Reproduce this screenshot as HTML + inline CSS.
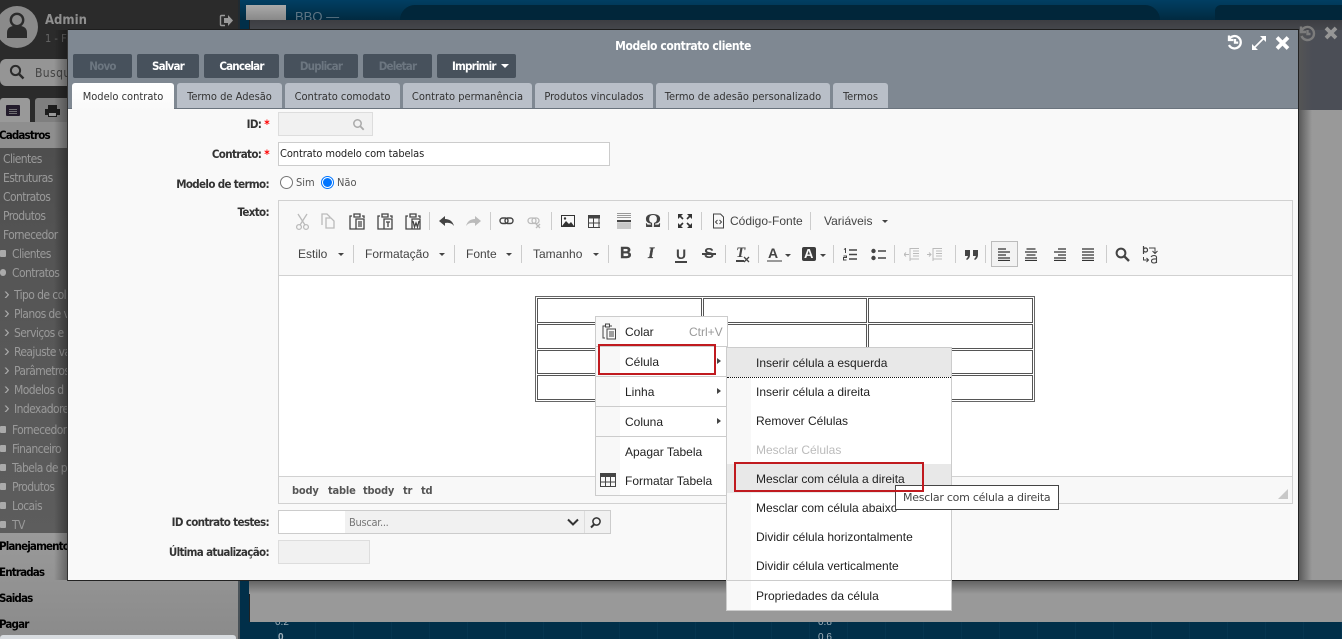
<!DOCTYPE html>
<html><head><meta charset="utf-8"><style>
html,body{margin:0;padding:0;width:1342px;height:639px;overflow:hidden;background:#012f49}
body{position:relative;font-family:"Liberation Sans",sans-serif;font-size:12px}
div,span,svg{position:absolute;box-sizing:border-box}
.t{white-space:nowrap;line-height:14px}
.c{font-family:"DejaVu Sans Condensed","DejaVu Sans",sans-serif;font-stretch:condensed}
.sb{color:#9a9a9a;font-size:12px;letter-spacing:-.6px;font-family:"DejaVu Sans Condensed","DejaVu Sans",sans-serif;font-stretch:condensed}
.sd{color:#000;font-weight:bold;font-size:11.5px;letter-spacing:-.85px;font-family:"DejaVu Sans Condensed","DejaVu Sans",sans-serif;font-stretch:condensed}
.cv{color:#aaa;font-size:17px;left:4px;line-height:14px;font-family:"Liberation Sans",sans-serif;white-space:nowrap}
.dot{width:6px;height:7px;background:#aaa;border-radius:1px;left:0}
.btn{top:54px;height:24px;background:#47515c;border-radius:2px;color:#fff;font-weight:bold;font-size:11.5px;text-align:center;line-height:24px;letter-spacing:-.8px;font-family:"DejaVu Sans Condensed","DejaVu Sans",sans-serif;font-stretch:condensed}
.btn.off{color:#6c7680}
.tab{top:83px;height:25px;background:#b9bfc8;border-radius:3px 3px 0 0;color:#333;font-size:11px;text-align:center;line-height:27px;white-space:nowrap;font-family:"DejaVu Sans Condensed","DejaVu Sans",sans-serif;font-stretch:condensed}
.lb{color:#333;font-weight:bold;font-size:11.5px;letter-spacing:-.65px;right:1073px;margin-top:1px;white-space:nowrap;line-height:14px;font-family:"DejaVu Sans Condensed","DejaVu Sans",sans-serif;font-stretch:condensed}
.r{color:#f00}
.tb{color:#444;font-size:12px;white-space:nowrap;line-height:14px}
.sep{width:1px;height:18px;background:#ccc}
.ar{width:0;height:0;border-left:3px solid transparent;border-right:3px solid transparent;border-top:3px solid #444}
.cell{border:1px solid #555;background:#fff}
.mi{color:#222;font-size:12px;white-space:nowrap;line-height:14px}
.tri{width:0;height:0;border-top:3px solid transparent;border-bottom:3px solid transparent;border-left:4px solid #444;left:717px}
.hr{height:1px;background:#ccc}
.ic{fill:none;stroke:#444;stroke-width:1.3}
.icd{fill:none;stroke:#bbb;stroke-width:1.3}
.pb{color:#555;font-weight:bold;font-size:11px;letter-spacing:-.2px;top:484px;white-space:nowrap;line-height:14px;font-family:"DejaVu Sans Condensed","DejaVu Sans",sans-serif;font-stretch:condensed}
</style></head><body>

<!-- backdrop right -->
<div style="left:240px;top:0;width:1102px;height:639px;background:repeating-linear-gradient(90deg,#012f49 0,#012f49 37px,#053550 37px,#053550 38px)"></div>
<div style="left:240px;top:0;width:1102px;height:20px;background:linear-gradient(#013f63,#012a40)"></div>
<div style="left:400px;top:5px;width:760px;height:15px;background:#01263a;border-radius:18px 18px 0 0"></div>
<div style="left:1215px;top:5px;width:127px;height:15px;background:#01263a;border-radius:6px 0 0 0"></div>
<div style="left:246px;top:5px;width:40px;height:15px;background:linear-gradient(#aaa,#888)"></div>
<span class="t" style="left:295px;top:10px;color:#5d7483;font-size:13px">BBO —</span>
<span class="t" style="left:275px;top:616px;color:#9fb0bb;font-size:10px;">0.2</span>
<span class="t" style="left:278px;top:631px;color:#9fb0bb;font-size:10px;font-weight:bold">0</span>
<span class="t" style="left:818px;top:616px;color:#9fb0bb;font-size:10px;">0.8</span>
<span class="t" style="left:818px;top:631px;color:#9fb0bb;font-size:10px;">0.6</span>
<div style="left:249px;top:20px;width:1093px;height:602px;background:#999;border-top:1px solid #1c1c1c;border-left:1px solid #222"></div>
<div style="left:250px;top:20px;width:1092px;height:16px;background:linear-gradient(#3d3e42,#4a4c52)"></div>
<div style="left:1298px;top:30px;width:44px;height:80px;background:#4b4e56"></div>
<div style="left:1298px;top:110px;width:44px;height:512px;background:#999"></div>
<div style="left:1298px;top:30px;width:14px;height:560px;background:linear-gradient(90deg,#555,rgba(85,85,85,0))"></div>
<div style="left:249px;top:580px;width:1093px;height:14px;background:linear-gradient(#606060,#999)"></div>
<svg style="left:1299px;top:25px" width="40" height="17" viewBox="0 0 40 17"><g fill="none" stroke="#7c7c7c" stroke-width="2.400"><path d="M2.500 6a6.500 6.500 0 1 1 0 5"/><path d="M2 1.500V7h5"/><path d="M8.500 5v4h3"/></g><path d="M27 3l10 10M37 3l-10 10" stroke="#969696" stroke-width="3.800"/></svg>

<!-- sidebar -->
<div style="left:0;top:0;width:240px;height:639px;background:#8c8c8c"></div>
<div style="left:0;top:0;width:240px;height:58px;background:#2b2b2b"></div>
<div style="left:0;top:58px;width:240px;height:39px;background:#2b2b2b"></div>
<div style="left:0;top:59px;width:240px;height:27px;background:#959595;border-radius:6px"></div>
<div style="left:0;top:97px;width:240px;height:25px;background:#2b2b2b"></div>
<div style="left:0;top:98px;width:30px;height:24px;background:#999;border-radius:3px 3px 0 0"></div>
<div style="left:35px;top:98px;width:40px;height:24px;background:#7f7f7f;border-radius:3px 3px 0 0"></div>
<div style="left:0;top:122px;width:240px;height:26px;background:#8e8e8e"></div>
<div style="left:0;top:148px;width:240px;height:385px;background:linear-gradient(#4e4e4e,#555 30%,#5d5d5d)"></div>
<div style="left:0;top:533px;width:240px;height:106px;background:linear-gradient(#9a9a9a,#8a8a8a)"></div>
<div style="left:0;top:635px;width:236px;height:4px;background:#d8dce0;border-radius:3px 3px 0 0"></div>
<div style="left:238px;top:0;width:2px;height:639px;background:#1a2a33;opacity:.6"></div>
<!-- avatar -->
<div style="left:-4px;top:6px;width:42px;height:42px;border-radius:50%;background:#8a8a8a"></div>
<svg style="left:4px;top:12px" width="26" height="28" viewBox="0 0 26 28"><circle cx="13" cy="8" r="6.200" fill="none" stroke="#2b2b2b" stroke-width="2.400"/><path d="M3 26v-5q0-6 6-7h8q6 1 6 7v5z" fill="#2b2b2b"/></svg>
<span class="t c" style="left:45px;top:14px;color:#8f8f8f;font-weight:bold;font-size:13px;">Admin</span>
<span class="t c" style="left:45px;top:32px;color:#666;font-size:11px;">1 - Filial</span>
<svg style="left:219px;top:14px" width="14" height="13" viewBox="0 0 14 13"><path d="M6 1.500H2.500q-1 0-1 1v8q0 1 1 1H6" fill="none" stroke="#999" stroke-width="1.400"/><path d="M5 4h4V1l5 5.500L9 12V9H5z" fill="#999"/></svg>
<svg style="left:9px;top:64px" width="16" height="16" viewBox="0 0 16 16"><circle cx="6.500" cy="6.500" r="4.600" fill="none" stroke="#2b2b2b" stroke-width="2"/><path d="M10 10l4.500 4.500" stroke="#2b2b2b" stroke-width="2.400"/></svg>
<span class="t c" style="left:35px;top:66px;color:#444;font-size:12px;letter-spacing:.4px">Busque</span>
<svg style="left:6px;top:105px" width="14" height="11" viewBox="0 0 14 11"><rect width="14" height="11" rx="1" fill="#231c2c"/><path d="M3 4.500h8M3 6.500h8M3 8.500h8" stroke="#8a8a8a" stroke-width=".7"/></svg>
<svg style="left:45px;top:104px" width="15" height="14" viewBox="0 0 15 14"><path d="M3 1h9v4H3zM0 5h15v6h-3v2H3v-2H0z" fill="#1c1c1c"/><path d="M4 9h7v3H4z" fill="#999"/></svg>
<span class="t sd" style="left:-1px;top:128px">Cadastros</span>
<span class="t sb" style="left:3px;top:152px">Clientes</span>
<span class="t sb" style="left:3px;top:171px">Estruturas</span>
<span class="t sb" style="left:3px;top:190px">Contratos</span>
<span class="t sb" style="left:3px;top:209px">Produtos</span>
<span class="t sb" style="left:3px;top:228px">Fornecedor</span>
<div class="dot" style="top:250px"></div><span class="t sb" style="left:12px;top:247px">Clientes</span>
<div class="dot" style="top:269px;border-radius:3px"></div><span class="t sb" style="left:12px;top:266px">Contratos</span>
<span class="cv" style="top:287px">›</span><span class="t sb" style="left:14px;top:288px">Tipo de col</span>
<span class="cv" style="top:306px">›</span><span class="t sb" style="left:14px;top:307px">Planos de v</span>
<span class="cv" style="top:325px">›</span><span class="t sb" style="left:14px;top:326px">Serviços e c</span>
<span class="cv" style="top:344px">›</span><span class="t sb" style="left:14px;top:345px">Reajuste va</span>
<span class="cv" style="top:363px">›</span><span class="t sb" style="left:14px;top:364px">Parâmetros</span>
<span class="cv" style="top:382px">›</span><span class="t sb" style="left:14px;top:383px">Modelos d</span>
<span class="cv" style="top:401px">›</span><span class="t sb" style="left:14px;top:402px">Indexadores</span>
<div class="dot" style="top:426px"></div><span class="t sb" style="left:12px;top:423px">Fornecedor</span>
<div class="dot" style="top:445px"></div><span class="t sb" style="left:12px;top:442px">Financeiro</span>
<div class="dot" style="top:464px"></div><span class="t sb" style="left:12px;top:461px">Tabela de p</span>
<div class="dot" style="top:483px"></div><span class="t sb" style="left:12px;top:480px">Produtos</span>
<div class="dot" style="top:502px"></div><span class="t sb" style="left:12px;top:499px">Locais</span>
<div class="dot" style="top:521px"></div><span class="t sb" style="left:12px;top:518px">TV</span>
<span class="t sd" style="left:-1px;top:539px">Planejamento</span>
<span class="t sd" style="left:-1px;top:565px">Entradas</span>
<span class="t sd" style="left:-1px;top:591px">Saidas</span>
<span class="t sd" style="left:-1px;top:617px">Pagar</span>
<div style="left:54px;top:30px;width:14px;height:550px;background:linear-gradient(90deg,rgba(0,0,0,0),rgba(0,0,0,.35))"></div>

<!-- modal -->
<div style="left:67px;top:29px;width:1232px;height:552px;background:#f9f9f9;border:1px solid #222;border-top-color:#1e1e1e;border-left-color:#333"></div>
<div style="left:68px;top:30px;width:1230px;height:79px;background:#7f8892"></div>
<span class="t c" style="left:568px;top:38px;width:230px;text-align:center;color:#fff;font-weight:bold;font-size:12px;letter-spacing:-.4px;margin-top:1px">Modelo contrato cliente</span>
<svg style="left:1226px;top:33px" width="66" height="19" viewBox="0 0 66 19"><g fill="none" stroke="#fff" stroke-width="2.300"><path d="M3 6.500a6.200 6.200 0 1 1 0 5.500"/><path d="M3 2.500V7h4.500"/><path d="M9 6v3.600h3.200"/></g><g stroke="#fff" stroke-width="1.700"><path d="M27 16L39 4"/></g><path d="M26 11v6h6zM40 9V3h-6z" fill="#fff"/><path d="M51 4.500l11 11M62 4.500l-11 11" stroke="#fff" stroke-width="3.800"/></svg>

<div class="btn off" style="left:73px;width:59px">Novo</div>
<div class="btn" style="left:137px;width:62px">Salvar</div>
<div class="btn" style="left:204px;width:75px">Cancelar</div>
<div class="btn off" style="left:284px;width:74px">Duplicar</div>
<div class="btn off" style="left:363px;width:69px">Deletar</div>
<div class="btn" style="left:437px;width:79px;text-align:left;padding-left:15px">Imprimir<span style="left:64px;top:10px;border-left:4px solid transparent;border-right:4px solid transparent;border-top:4px solid #fff"></span></div>

<div style="left:68px;top:108px;width:1230px;height:1px;background:#6a737d"></div>
<div class="tab" style="left:72px;width:102px;background:linear-gradient(#fff,#f9f9f9);height:27px">Modelo contrato</div>
<div class="tab" style="left:177px;width:105px">Termo de Adesão</div>
<div class="tab" style="left:285px;width:115px">Contrato comodato</div>
<div class="tab" style="left:403px;width:129px">Contrato permanência</div>
<div class="tab" style="left:535px;width:118px">Produtos vinculados</div>
<div class="tab" style="left:656px;width:174px">Termo de adesão personalizado</div>
<div class="tab" style="left:833px;width:55px">Termos</div>

<!-- form -->
<span class="lb" style="top:116px">ID: <b class="r">*</b></span>
<div style="left:278px;top:112px;width:95px;height:24px;background:#f1f1f1;border:1px solid #ddd"></div>
<svg style="left:352px;top:118px" width="13" height="13" viewBox="0 0 13 13"><circle cx="5.500" cy="5.500" r="3.700" fill="none" stroke="#aaa" stroke-width="1.500"/><path d="M8.300 8.300l3.400 3.400" stroke="#aaa" stroke-width="1.800"/></svg>
<span class="lb" style="top:146px">Contrato: <b class="r">*</b></span>
<div style="left:278px;top:142px;width:332px;height:24px;background:#fff;border:1px solid #ccc"></div>
<span class="t c" style="left:280px;top:147px;color:#222;font-size:11px;letter-spacing:-.1px">Contrato modelo com tabelas</span>
<span class="lb" style="top:176px">Modelo de termo:</span>
<div style="left:280px;top:176px;width:13px;height:13px;border-radius:50%;border:1px solid #767676;background:#fff"></div>
<span class="t c" style="left:296px;top:176px;color:#555;font-size:11px;">Sim</span>
<div style="left:321px;top:176px;width:13px;height:13px;border-radius:50%;border:1px solid #0075ff;background:#fff"></div>
<div style="left:323px;top:178px;width:9px;height:9px;border-radius:50%;background:#0075ff"></div>
<span class="t c" style="left:337px;top:176px;color:#555;font-size:11px;">Não</span>
<span class="lb" style="top:204px">Texto:</span>

<!-- editor -->
<div style="left:278px;top:200px;width:1015px;height:304px;border:1px solid #d1d1d1;background:#f8f8f8"></div>
<div style="left:279px;top:275px;width:1013px;height:202px;background:#fff;border-top:1px solid #d1d1d1;border-bottom:1px solid #d1d1d1"></div>

<!-- toolbar row 1 -->
<svg style="left:290px;top:210px" width="310" height="22" viewBox="0 0 310 22">
<g class="icd"><circle cx="9" cy="17" r="2.400"/><circle cx="16" cy="17" r="2.400"/><path d="M10 15L17 4M15 15L8 4"/>
<path d="M32 15V4h5l3 3v1M36 8h5l3 3v7h-8z"/></g>
<g class="ic"><path d="M62 6h-2v13h6M72 6h2v2M64 4h6v3h-6zM66 9h8v10h-8zM68 12h4M68 14h4M68 16h4"/>
<path d="M90 6h-2v13h6M100 6h2v2M92 4h6v3h-6zM94 9h8v10h-8zM96 12h4M98 12v5"/>
<path d="M118 6h-2v13h6M128 6h2v2M120 4h6v3h-6zM122 9h8v10h-8zM123 11l1.500 6 1.500-4 1.500 4 1.500-6"/></g>
<path d="M149 11l6-5v3q7 0 9 7-3-4-9-3v3z" fill="#444"/>
<path d="M191 11l-6-5v3q-7 0-9 7 3-4 9-3v3z" fill="#bbb"/>
<g class="ic" style="stroke-width:1.400"><rect x="210" y="8" width="8" height="5.500" rx="2.700"/><rect x="215" y="8" width="8" height="5.500" rx="2.700"/></g>
<g class="icd"><rect x="238" y="8" width="8" height="5.500" rx="2.700"/><rect x="242" y="8" width="7" height="5.500" rx="2.700"/><path d="M246 14l4 4M250 14l-4 4"/></g>
<rect x="271.500" y="5.500" width="13" height="11" fill="none" stroke="#333"/><path d="M272 16l4-5 3 3 2-2 3 4z" fill="#333"/><circle cx="275" cy="8.500" r="1.200" fill="#333"/>
<rect x="298.500" y="5.500" width="15" height="12" fill="none" stroke="#444"/><rect x="298" y="5" width="16" height="3.500" fill="#444"/><path d="M298 13h16M303.500 8v10M309 8v10" stroke="#444"/>
</svg>
<div class="sep" style="left:429px;top:212px"></div>
<div class="sep" style="left:490px;top:212px"></div>
<div class="sep" style="left:551px;top:212px"></div>
<svg style="left:615px;top:212px" width="18" height="18" viewBox="0 0 18 18"><path d="M2 1.500h14M2 3.500h14M2 5.500h14M2 12h14M2 14h14M2 16h14" stroke="#999"/><rect x="2" y="8" width="14" height="2.200" fill="#444"/></svg>
<span class="t" style="left:645px;top:211px;color:#444;font-family:'Liberation Serif',serif;font-size:20px;line-height:20px;font-weight:bold">Ω</span>
<div class="sep" style="left:668px;top:212px"></div>
<svg style="left:677px;top:213px" width="16" height="16" viewBox="0 0 16 16"><g stroke="#333" stroke-width="1.600"><path d="M2 2l4 4M14 2l-4 4M2 14l4-4M14 14l-4-4"/></g><path d="M1 1h5L1 6zM15 1h-5l5 5zM1 15h5l-5-5zM15 15h-5l5-5z" fill="#333"/></svg>
<div class="sep" style="left:701px;top:212px"></div>
<svg style="left:712px;top:213px" width="13" height="16" viewBox="0 0 13 16"><path d="M1.500 1h7l3 3v11h-10z" fill="none" stroke="#444"/><path d="M5.500 7l-2 2 2 2M7.500 7l2 2-2 2" fill="none" stroke="#444"/></svg>
<span class="tb" style="left:730px;top:214px">Código-Fonte</span>
<div class="sep" style="left:810px;top:212px"></div>
<span class="tb" style="left:824px;top:214px">Variáveis</span><div class="ar" style="left:882px;top:220px"></div>

<!-- toolbar row 2 -->
<span class="tb" style="left:298px;top:247px">Estilo</span><div class="ar" style="left:338px;top:253px"></div>
<div class="sep" style="left:353px;top:245px"></div>
<span class="tb" style="left:365px;top:247px">Formatação</span><div class="ar" style="left:439px;top:253px"></div>
<div class="sep" style="left:454px;top:245px"></div>
<span class="tb" style="left:466px;top:247px">Fonte</span><div class="ar" style="left:506px;top:253px"></div>
<div class="sep" style="left:521px;top:245px"></div>
<span class="tb" style="left:533px;top:247px">Tamanho</span><div class="ar" style="left:593px;top:253px"></div>
<div class="sep" style="left:608px;top:245px"></div>
<span class="t" style="left:620px;top:246px;color:#444;font-weight:bold;font-size:16px;line-height:16px;-webkit-text-stroke:.4px #444">B</span>
<span class="t" style="left:648px;top:246px;color:#444;font-weight:bold;font-style:italic;font-size:16px;line-height:16px;font-family:'Liberation Serif',serif;-webkit-text-stroke:.3px #444">I</span>
<span class="t" style="left:676px;top:246px;color:#444;font-weight:bold;font-size:14px;line-height:16px">U</span>
<div style="left:675px;top:261px;width:12px;height:1.500px;background:#444"></div>
<span class="t" style="left:704px;top:246px;color:#444;font-weight:bold;font-size:15px;line-height:16px">S</span>
<div style="left:702px;top:253px;width:14px;height:1.500px;background:#444"></div>
<div class="sep" style="left:725px;top:245px"></div>
<span class="t" style="left:736px;top:245px;color:#444;font-weight:bold;font-style:italic;font-size:15px;line-height:16px;font-family:'Liberation Serif',serif;">T</span>
<div style="left:736px;top:260px;width:8px;height:1.500px;background:#444"></div>
<svg style="left:743px;top:256px" width="7" height="7" viewBox="0 0 7 7"><path d="M1 1l5 5M6 1l-5 5" stroke="#444" stroke-width="1.300"/></svg>
<div class="sep" style="left:758px;top:245px"></div>
<span class="t" style="left:768px;top:246px;color:#444;font-weight:bold;font-size:14px;line-height:15px">A</span>
<div style="left:767px;top:260px;width:15px;height:2px;background:#999"></div>
<div class="ar" style="left:785px;top:254px"></div>
<div style="left:802px;top:247px;width:14px;height:14px;background:#3d3d3d;border-radius:2px"></div>
<span class="t" style="left:804px;top:246px;color:#f8f8f8;font-weight:bold;font-size:13px;line-height:15px">A</span>
<div class="ar" style="left:820px;top:254px"></div>
<div class="sep" style="left:833px;top:245px"></div>
<svg style="left:843px;top:248px" width="14" height="13" viewBox="0 0 14 13"><path d="M6 2h8M6 6.500h8M6 11h8" stroke="#444" stroke-width="1.400"/><path d="M1 1.500l1.500-1V5M.5 8h3v1.500h-3V12h3" fill="none" stroke="#444"/></svg>
<svg style="left:871px;top:248px" width="15" height="13" viewBox="0 0 15 13"><circle cx="2.500" cy="3" r="2.200" fill="#444"/><circle cx="2.500" cy="10" r="2.200" fill="#444"/><path d="M7 3h8M7 10h8" stroke="#444" stroke-width="1.500"/></svg>
<div class="sep" style="left:894px;top:245px"></div>
<svg style="left:904px;top:248px" width="44" height="13" viewBox="0 0 44 13"><path d="M6 .5h9M9 3h6M9 5.500h6M9 8h6M6 11h9" stroke="#bbb"/><path d="M5 6.500H0M2 4.500l-2 2 2 2M6 0v13" stroke="#bbb" fill="none"/><path d="M29 .5h9M32 3h6M32 5.500h6M32 8h6M29 11h9" stroke="#bbb"/><path d="M23 6.500h4M25 4.500l2 2-2 2M29 0v13" stroke="#bbb" fill="none"/></svg>
<div class="sep" style="left:955px;top:245px"></div>
<svg style="left:964px;top:250px" width="16" height="10" viewBox="0 0 16 10"><path d="M1 0h5v5q0 3-3 5l-1-1q1.500-1 2-3H1zM9 0h5v5q0 3-3 5l-1-1q1.500-1 2-3H9z" fill="#444"/></svg>
<div class="sep" style="left:985px;top:245px"></div>
<div style="left:991px;top:241px;width:27px;height:26px;background:#f2f2f2;border:1px solid #bbb"></div>
<svg style="left:998px;top:248px" width="104" height="13" viewBox="0 0 104 13">
<g stroke="#333" stroke-width="1.300"><path d="M0 1h8M0 4h12M0 7h8M0 10h12M0 12.500h12"/><path d="M28.500 1h9M27 4h12M28.500 7h9M27 10h12M27 12.500h12"/><path d="M60 1h8M56 4h12M60 7h8M56 10h12M56 12.500h12"/><path d="M84 1h12M84 4h12M84 7h12M84 10h12M84 12.500h12"/></g></svg>
<div class="sep" style="left:1106px;top:245px"></div>
<svg style="left:1115px;top:247px" width="15" height="15" viewBox="0 0 15 15"><circle cx="6" cy="6" r="4.400" fill="none" stroke="#444" stroke-width="2"/><path d="M9.500 9.500l4.500 4.500" stroke="#444" stroke-width="2.400"/></svg>
<svg style="left:1141px;top:245px" width="18" height="19" viewBox="0 0 18 19"><path d="M2.500 1v8M2.500 5q0-2 2-2t2 2-2 2-2-2z" fill="none" stroke="#444" stroke-width="1.200"/><path d="M8 3h6v5M11.500 6l2.500 2.500L16.500 6M2.500 12v3h5M5.500 13l2 2-2 2" fill="none" stroke="#444"/><path d="M10 12q1-1.500 3-1.500t2.500 1.500v6M15.500 14q-5-.5-5 2 0 2 2.500 2t2.500-2" fill="none" stroke="#444" stroke-width="1.100"/></svg>

<!-- table in editor -->
<div style="left:535px;top:296px;width:500px;height:106px;border:1px solid #666;background:#fff"></div>
<div class="cell" style="left:537px;top:298px;width:165px;height:25px"></div>
<div class="cell" style="left:703px;top:298px;width:164px;height:25px"></div>
<div class="cell" style="left:868px;top:298px;width:165px;height:25px"></div>
<div class="cell" style="left:537px;top:324px;width:165px;height:25px"></div>
<div class="cell" style="left:703px;top:324px;width:164px;height:25px"></div>
<div class="cell" style="left:868px;top:324px;width:165px;height:25px"></div>
<div class="cell" style="left:537px;top:350px;width:165px;height:24px"></div>
<div class="cell" style="left:703px;top:350px;width:164px;height:24px"></div>
<div class="cell" style="left:868px;top:350px;width:165px;height:24px"></div>
<div class="cell" style="left:537px;top:375px;width:165px;height:25px"></div>
<div class="cell" style="left:703px;top:375px;width:164px;height:25px"></div>
<div class="cell" style="left:868px;top:375px;width:165px;height:25px"></div>

<!-- path bar -->
<span class="pb" style="left:292px">body</span>
<span class="pb" style="left:328px">table</span>
<span class="pb" style="left:363px">tbody</span>
<span class="pb" style="left:403px">tr</span>
<span class="pb" style="left:421px">td</span>
<svg style="left:1278px;top:489px" width="11" height="11" viewBox="0 0 11 11"><path d="M10 0v10H0z" fill="#c8c8c8"/></svg>

<!-- bottom form -->
<span class="lb" style="top:514px">ID contrato testes:</span>
<div style="left:278px;top:510px;width:333px;height:24px;background:#fff;border:1px solid #ccc"></div>
<div style="left:345px;top:511px;width:265px;height:22px;background:#f1f1f1"></div>
<span class="t c" style="left:349px;top:516px;color:#777;font-size:11px;letter-spacing:-.3px">Buscar...</span>
<svg style="left:566px;top:518px" width="14" height="9" viewBox="0 0 14 9"><path d="M2 1.500l5 5 5-5" fill="none" stroke="#333" stroke-width="2"/></svg>
<div style="left:584px;top:511px;width:1px;height:22px;background:#ddd"></div>
<svg style="left:590px;top:516px" width="13" height="13" viewBox="0 0 13 13"><circle cx="6.500" cy="5.500" r="3.600" fill="none" stroke="#333" stroke-width="1.500"/><path d="M4 8.500L1 11.500" stroke="#333" stroke-width="2"/></svg>
<span class="lb" style="top:544px">Última atualização:</span>
<div style="left:278px;top:540px;width:92px;height:24px;background:#f1f1f1;border:1px solid #ddd"></div>

<!-- context menu 1 -->
<div style="left:595px;top:316px;width:133px;height:180px;background:#fff;border:1px solid #ccc"></div>
<div style="left:596px;top:317px;width:24px;height:178px;background:#f8f8f8"></div>
<svg style="left:601px;top:323px" width="16" height="18" viewBox="0 0 16 18"><path d="M4 3H2v12h2M11 3H9" fill="none" stroke="#444"/><path d="M4.500 1h4v3h-4zM6 6h8.500v10H6zM8 9h5M8 11h5M8 13h5" fill="none" stroke="#444"/></svg>
<span class="mi" style="left:625px;top:325px">Colar</span>
<span class="mi" style="left:689px;top:325px;color:#999">Ctrl+V</span>
<div class="hr" style="left:596px;top:346px;width:131px"></div>
<span class="mi" style="left:625px;top:355px">Célula</span><div class="tri" style="top:358px"></div>
<div class="hr" style="left:596px;top:376px;width:131px"></div>
<span class="mi" style="left:625px;top:385px">Linha</span><div class="tri" style="top:388px"></div>
<div class="hr" style="left:596px;top:406px;width:131px"></div>
<span class="mi" style="left:625px;top:415px">Coluna</span><div class="tri" style="top:418px"></div>
<div class="hr" style="left:596px;top:436px;width:131px"></div>
<span class="mi" style="left:625px;top:445px">Apagar Tabela</span>
<svg style="left:600px;top:473px" width="16" height="14" viewBox="0 0 16 14"><rect x=".5" y=".5" width="15" height="13" fill="none" stroke="#444"/><rect x=".5" y=".5" width="15" height="3.500" fill="#444"/><path d="M0 9h16M5.500 4v10M10.500 4v10" stroke="#444"/></svg>
<span class="mi" style="left:625px;top:474px">Formatar Tabela</span>

<!-- submenu -->
<div style="left:726px;top:347px;width:226px;height:264px;background:#fff;border:1px solid #ccc"></div>
<div style="left:727px;top:348px;width:24px;height:262px;background:#f8f8f8"></div>
<div style="left:727px;top:348px;width:224px;height:29px;background:#e8e8e8"></div>
<div style="left:727px;top:377px;width:224px;height:1px;border-top:1px dotted #111"></div>
<div style="left:727px;top:464px;width:224px;height:29px;background:#e8e8e8"></div>
<span class="mi" style="left:756px;top:356px">Inserir célula a esquerda</span>
<span class="mi" style="left:756px;top:385px">Inserir célula a direita</span>
<span class="mi" style="left:756px;top:414px">Remover Células</span>
<span class="mi" style="left:756px;top:443px;color:#bbb">Mesclar Células</span>
<span class="mi" style="left:756px;top:472px">Mesclar com célula a direita</span>
<span class="mi" style="left:756px;top:501px">Mesclar com célula abaixo</span>
<span class="mi" style="left:756px;top:530px">Dividir célula horizontalmente</span>
<span class="mi" style="left:756px;top:559px">Dividir célula verticalmente</span>
<div class="hr" style="left:727px;top:580px;width:224px"></div>
<span class="mi" style="left:756px;top:589px">Propriedades da célula</span>

<!-- tooltip -->
<div style="left:895px;top:485px;width:164px;height:25px;background:#fff;border:1px solid #444"></div>
<span class="t" style="left:903px;top:491px;color:#444;font-size:11px;font-family:'DejaVu Sans',sans-serif;letter-spacing:-.25px">Mesclar com célula a direita</span>

<!-- red highlight boxes -->
<div style="left:598px;top:344px;width:118px;height:31px;border:2px solid #c01a1f"></div>
<div style="left:734px;top:462px;width:190px;height:30px;border:2px solid #c01a1f"></div>

</body></html>
